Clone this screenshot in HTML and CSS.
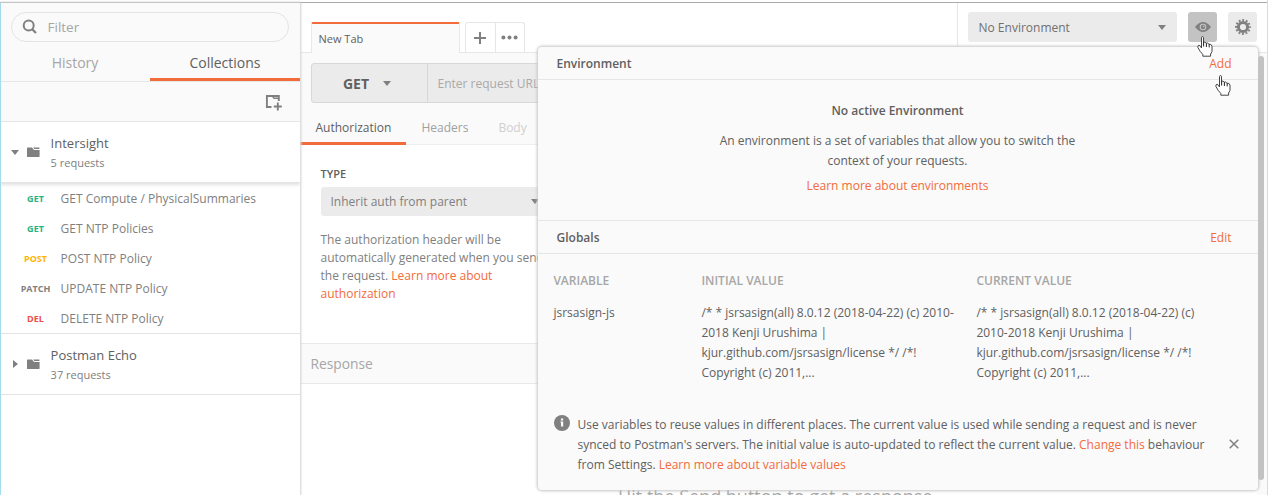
FILE: index.html
```html
<!DOCTYPE html>
<html lang="en">
<head>
<meta charset="utf-8">
<title>Postman</title>
<link rel="stylesheet" href="styles.css">
</head>
<body>
<svg class="defs" width="0" height="0">
  <symbol id="folder" viewBox="0 0 13 10"><path fill="#808080" d="M0 1.2Q0 .6.6.6H5L7 3.1H12.6V9.6Q12.6 10 12 10H.6Q0 10 0 9.4ZM6.3.5H12.4V1.9H7.2Z"/></symbol>
  <symbol id="hand" viewBox="0 0 16 21"><path fill="#fff" stroke="#444" stroke-linejoin="round" d="M4.5 12V1.6Q4.6.6 5.5.6T6.5 1.6V6.2Q8 5.5 9.2 7.2 10.8 6.3 12 8.3 14.3 7.7 15 10V15.5L13.6 18V20.2H5.8V18.4L3.2 15.4.9 11.5Q.5 9.5 2 9.3 3.4 9.8 4.5 12Z"/><path fill="none" stroke="#222" d="M6.6 6V10.5M9.4 7.2V11M12.2 8.3V11.4"/></symbol>
</svg>
<div class="window">
  <aside class="sidebar">
    <div class="filter">
      <svg width="16" height="16" viewBox="0 0 16 16"><circle cx="6.7" cy="6.5" r="5" fill="none" stroke="#808080" stroke-width="2"/><path d="M10.2 10.2 14 14" stroke="#808080" stroke-width="2.2"/></svg>
      <span>Filter</span>
    </div>
    <nav class="side-tabs"><span>History</span><span class="active">Collections</span></nav>
    <div class="side-tools">
      <svg width="18" height="17" viewBox="0 0 18 17" fill="none" stroke="#808080"><path stroke-width="1.9" d="M6.5 13H1.9V2H13.8V7"/><path stroke-width="1.4" d="M7.5 2.3 9 4.3H14"/><path stroke-width="1.9" d="M12.8 8.6V16.4M8.8 12.5H16.8"/></svg>
    </div>
    <section class="collection open">
      <i class="caret down"></i><svg class="folder" width="13" height="10"><use href="#folder"/></svg>
      <div><h3>Intersight</h3><p>5 requests</p></div>
    </section>
    <ul class="requests">
      <li><b class="get">GET</b><span>GET Compute / PhysicalSummaries</span></li>
      <li><b class="get">GET</b><span>GET NTP Policies</span></li>
      <li><b class="post">POST</b><span>POST NTP Policy</span></li>
      <li><b class="patch">PATCH</b><span>UPDATE NTP Policy</span></li>
      <li><b class="del">DEL</b><span>DELETE NTP Policy</span></li>
    </ul>
    <section class="collection">
      <i class="caret right"></i><svg class="folder" width="13" height="10"><use href="#folder"/></svg>
      <div><h3>Postman Echo</h3><p>37 requests</p></div>
    </section>
  </aside>
  <main class="main">
    <header class="topbar">
      <div class="tabs">
        <div class="tab">New Tab</div>
        <div class="tab-buttons">
          <span><svg width="12" height="12" viewBox="0 0 12 12"><path d="M6 0V12M0 6H12" stroke="#808080" stroke-width="2"/></svg></span>
          <span><svg width="17" height="5" viewBox="0 0 17 5" fill="#808080"><circle cx="2.4" cy="2.5" r="2"/><circle cx="8.5" cy="2.5" r="2"/><circle cx="14.6" cy="2.5" r="2"/></svg></span>
        </div>
      </div>
      <div class="env-bar">
        <div class="env-select"><span>No Environment</span><i class="caret down"></i></div>
        <div class="icon-button pressed"><svg width="16" height="10" viewBox="0 0 16 10"><path fill="#808080" d="M0 5Q8-5 16 5 8 15 0 5Z"/><circle cx="8" cy="5" r="3.3" fill="#c3c3c3"/><circle cx="8" cy="5" r="2.2" fill="#808080"/><circle cx="8.6" cy="4.5" r=".8" fill="#c3c3c3"/></svg></div>
        <div class="icon-button"><svg width="16" height="16" viewBox="0 0 16 16"><circle cx="8" cy="8" r="4.6" fill="none" stroke="#808080" stroke-width="3"/><circle cx="8" cy="8" r="6.9" fill="none" stroke="#808080" stroke-width="2" stroke-dasharray="1.9 1.713" stroke-dashoffset=".95"/></svg></div>
      </div>
    </header>
    <div class="builder">
      <div class="url-bar"><div class="method"><b>GET</b><i class="caret down"></i></div><div class="url">Enter request URL</div></div>
      <nav class="req-tabs"><span class="active">Authorization</span><span>Headers</span><span class="disabled">Body</span></nav>
    </div>
    <div class="auth">
      <h4>TYPE</h4>
      <div class="auth-select"><span>Inherit auth from parent</span><i class="caret down"></i></div>
      <p>The authorization header will be<br>automatically generated when you send<br>the request. <a>Learn more about<br>authorization</a></p>
    </div>
    <div class="response">Response</div>
    <div class="empty">Hit the Send button to get a response.</div>
  </main>
  <div class="scrollbar"><i></i></div>
  <div class="popup">
    <header class="pop-head"><b>Environment</b><a>Add</a></header>
    <div class="no-env">
      <b>No active Environment</b>
      <p>An environment is a set of variables that allow you to switch the<br>context of your requests.</p>
      <a>Learn more about environments</a>
    </div>
    <header class="pop-head second"><b>Globals</b><a>Edit</a></header>
    <div class="vars">
      <b>VARIABLE</b><b>INITIAL VALUE</b><b>CURRENT VALUE</b>
      <span>jsrsasign-js</span>
      <span>/* * jsrsasign(all) 8.0.12 (2018-04-22) (c) 2010-<br>2018 Kenji Urushima |<br>kjur.github.com/jsrsasign/license */ /*!<br>Copyright (c) 2011,...</span>
      <span>/* * jsrsasign(all) 8.0.12 (2018-04-22) (c)<br>2010-2018 Kenji Urushima |<br>kjur.github.com/jsrsasign/license */ /*!<br>Copyright (c) 2011,...</span>
    </div>
    <footer class="info">
      <svg width="16" height="16" viewBox="0 0 16 16"><circle cx="8" cy="8" r="8" fill="#808080"/><path fill="#fafafa" d="M6.9 3.5H9.2V5.4H6.9ZM6.4 6.4H9.2V11.6H7V7.6H6.4Z"/></svg>
      <p>Use variables to reuse values in different places. The current value is used while sending a request and is never<br>synced to Postman's servers. The initial value is auto-updated to reflect the current value. <a>Change this</a> behaviour<br>from Settings. <a>Learn more about variable values</a></p>
      <svg class="close" width="10" height="10" viewBox="0 0 10 10"><path d="M.7.7 9.3 9.3M9.3.7.7 9.3" stroke="#808080" stroke-width="1.5"/></svg>
    </footer>
  </div>
  <svg class="hand one" width="16" height="21"><use href="#hand"/></svg>
  <svg class="hand two" width="16" height="21"><use href="#hand"/></svg>
</div>
</body>
</html>
```
FILE: styles.css
```css
* { box-sizing: border-box; }
body { margin: 0; font-family: "Open Sans", sans-serif; font-size: 12px; color: #808080; background: #fff; }
h3, h4, p, ul { margin: 0; padding: 0; font-weight: 400; }
b, h4 { font-weight: 600; }
a { color: #f26b3a; }
.defs { position: absolute; }
.window { position: relative; width: 1268px; height: 495px; overflow: hidden; display: flex; padding-top: 3px; border-right: 1px solid #b9e6f2; background: linear-gradient(#fff 0 1.5px, #aaa 2px 3px, #fff 3px); white-space: nowrap; }
.window::before { content: ""; position: absolute; z-index: 2; left: 0; top: 3px; bottom: 0; width: 1px; background: #a3dcef; }
.caret { display: block; width: 0; height: 0; border: 4px solid transparent; }
.caret.down { border-top: 5px solid #808080; border-bottom: 0; }
.caret.right { border-left: 5px solid #808080; border-right: 0; }

.sidebar { position: relative; width: 300px; flex: none; background: #fff; box-shadow: 0 0 2px 1px #d0d0d0; }
.sidebar::before { content: ""; display: block; height: 9px; background: #fafafa; box-shadow: inset 0 2px 2px -1px #ccc; }
.filter { display: flex; align-items: center; gap: 9.5px; height: 30px; margin: 0 11px; padding-left: 10px; border: 1px solid #e4e4e4; border-radius: 15px; background: #fafafa; color: #a6a6a6; font-size: 13.5px; box-shadow: 0 0 0 60px #fafafa; clip-path: inset(-9px -11px 0 -11px); }
.side-tabs { display: flex; height: 40px; background: #fafafa; border-bottom: 1px solid #e6e6e6; font-size: 14px; line-height: 42px; text-align: center; color: #a6a6a6; }
.side-tabs span { flex: 1; height: 39px; }
.side-tabs .active { color: #606060; border-bottom: 3px solid #f26b3a; }
.side-tools { display: flex; justify-content: flex-end; align-items: center; height: 40px; padding: 1px 17px 0 0; background: #fafafa; border-bottom: 1px solid #e6e6e6; }
.collection { display: flex; align-items: center; height: 61px; padding-left: 10.5px; border-bottom: 1px solid #e4e4e4; }
.collection .caret { margin-right: 8.5px; }
.collection .caret.right { margin-left: 2px; margin-right: 9.5px; }
.folder { margin-right: 10.6px; }
.collection h3 { font-size: 13px; line-height: 20px; color: #606060; }
.collection p { font-size: 11px; line-height: 19px; }
.open { box-shadow: 0 2px 3px #e2e2e2; }
.requests { list-style: none; border-bottom: 1px solid #e4e4e4; height: 151px; }
.requests li { display: flex; align-items: center; height: 30px; font-size: 12px; }
.requests b { width: 71px; margin-right: -10.4px; text-align: center; font-size: 9px; font-weight: 700; }
.get { color: #26b47f; } .post { color: #ffb400; } .patch { color: #808080; } .del { color: #ed4b48; }

.main { flex: 1; min-width: 0; background: #fff; }
.topbar { display: flex; height: 50px; border-bottom: 1px solid #e6e6e6; }
.tabs { flex: 1; display: flex; align-items: flex-end; padding-left: 11px; gap: 5px; }
.tab { width: 149px; height: 31px; margin-bottom: -1px; padding-left: 6.5px; border: 1px solid #e8e8e8; border-top: 2px solid #f26b3a; border-bottom: 0; border-radius: 2px 2px 0 0; background: #fafafa; font-size: 11px; line-height: 30px; color: #606060; }
.tab-buttons { display: flex; height: 30px; border: 1px solid #e6e6e6; border-bottom: 0; border-radius: 3px 3px 0 0; }
.tab-buttons span { width: 29px; display: flex; align-items: center; justify-content: center; padding-right: 1px; }
.tab-buttons span + span { border-left: 1px solid #e6e6e6; }
.env-bar { display: flex; width: 310px; padding: 9px 0 0 10px; gap: 11px; border-left: 1px solid #e6e6e6; }
.env-select { display: flex; align-items: center; justify-content: space-between; width: 209px; height: 30px; padding: 1px 11px 0 10.5px; background: #ebebeb; border-radius: 3px; color: #707070; }
.icon-button { display: flex; align-items: center; justify-content: center; width: 29px; height: 30px; background: #ebebeb; border-radius: 3px; }
.pressed { background: #c3c3c3; }
.builder { height: 92px; padding-top: 10px; background: #fafafa; border-bottom: 1px solid #eee; }
.url-bar { display: flex; height: 40px; margin: 0 20px 0 11px; background: #ebebeb; border: 1px solid #d8d8d8; border-radius: 3px; }
.method { display: flex; align-items: center; justify-content: center; gap: 14px; width: 116px; padding-right: 5px; border-right: 1px solid #d6d6d6; font-size: 14px; color: #606060; }
.method b { font-weight: 700; }
.url { padding-left: 9.5px; line-height: 39px; font-size: 12px; color: #a9a9a9; }
.req-tabs { display: flex; height: 42px; line-height: 50px; color: #a0a0a0; }
.req-tabs span { padding: 0 15px; }
.req-tabs .active { padding: 0 15px 0 15.5px; color: #606060; border-bottom: 3px solid #f26b3a; }
.req-tabs .disabled { color: #d0d0d0; }
.auth { height: 198px; padding: 20px 0 0 20.5px; }
.auth h4 { height: 22px; font-size: 11px; line-height: 18px; color: #606060; }
.auth-select { display: flex; align-items: center; justify-content: space-between; width: 227px; height: 29px; padding: 0 9px 0 10px; border-radius: 3px; background: #ebebeb; }
.auth p { margin-top: 15px; line-height: 18px; }
.response { height: 41px; padding-left: 10.5px; border: solid #e8e8e8; border-width: 1px 0; background: #fafafa; line-height: 39px; font-size: 13.8px; color: #a6a6a6; }
.empty { margin-top: 97px; padding-left: 318px; font-size: 18px; line-height: 30px; color: #a6a6a6; }

.scrollbar { position: absolute; left: 1257px; top: 53px; bottom: 0; width: 10px; padding: 3px 1px; background: #fafafa; }
.scrollbar i { display: block; width: 6px; height: 424px; border-radius: 3px; background: #c2c2c2; }
.popup { position: absolute; left: 538px; top: 47px; width: 720px; height: 443px; background: #fafafa; border-radius: 4px; box-shadow: 0 0 3px 1px #c4c4c4; color: #606060; }
.pop-head { display: flex; justify-content: space-between; height: 33px; padding: 0 26.5px 0 18.5px; line-height: 33px; border-bottom: 1px solid #e6e6e6; }
.second { height: 34px; border-top: 1px solid #e6e6e6; }
.no-env { height: 140px; padding: 21px 1px 0 0; text-align: center; line-height: 20px; }
.no-env b { display: block; margin-bottom: 10px; }
.no-env p { margin-bottom: 5px; }
.vars { display: grid; grid-template-columns: 148px 275px auto; grid-template-rows: 32px 114px; padding: 17px 0 0 15.4px; line-height: 20px; }
.vars b { color: #a6a6a6; }
.info { display: flex; align-items: flex-start; margin-top: -7px; padding: 5px 19.5px 0 15.5px; line-height: 20px; }
.info p { flex: 1; margin-left: 8px; }
.close { margin-top: 24px; }
.hand { position: absolute; }
.one { left: 1197px; top: 36px; }
.two { left: 1215px; top: 75px; }
```
